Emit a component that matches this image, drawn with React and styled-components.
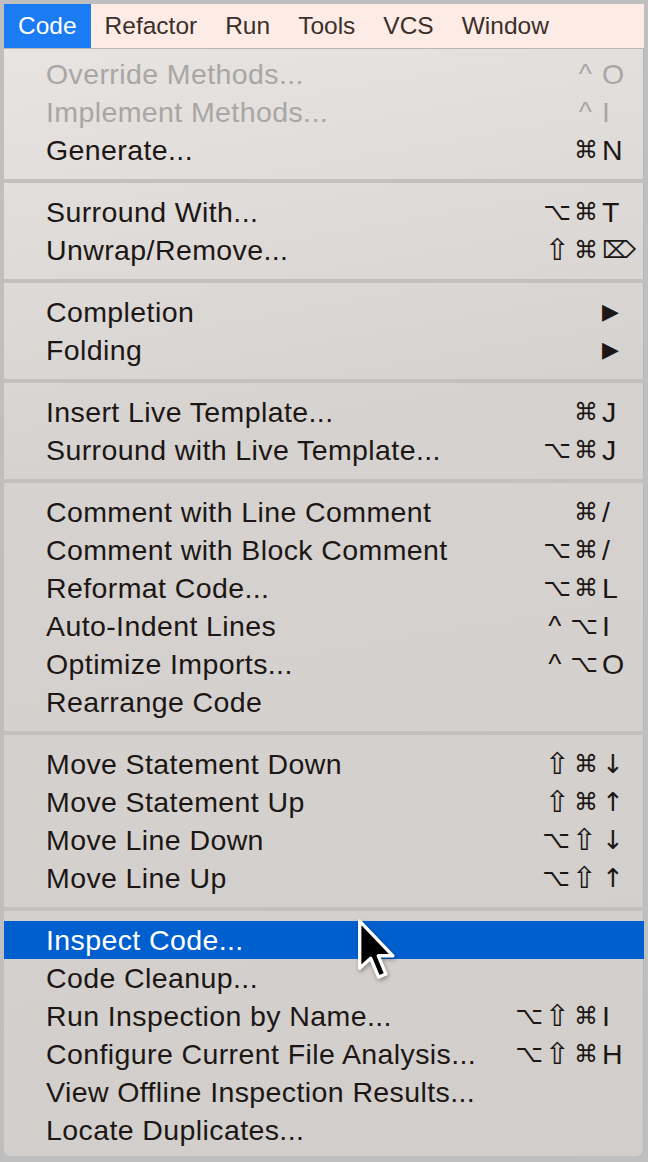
import React from "react";
import styled, { createGlobalStyle } from "styled-components";

const Global = createGlobalStyle`
  html, body { margin: 0; padding: 0; }
  body { background: #bfbfbf; font-family: "Liberation Sans", "DejaVu Sans", Arial, sans-serif; }
  * { box-sizing: border-box; }
`;

const Page = styled.div`
  width: 648px;
  height: 1162px;
  padding: 4px 4px 0 4px;
  background: #bfbfbf;
  display: flex;
  flex-direction: column;
  overflow: hidden;
`;

const MenuBar = styled.div`
  height: 45px;
  background: #fdebe6;
  border-bottom: 1px solid #b9b6b4;
  display: flex;
  align-items: stretch;
  overflow: hidden;
  white-space: nowrap;
`;

const BarItem = styled.div`
  padding: 0 14px;
  display: flex;
  align-items: center;
  font-size: 24.5px;
  color: ${p => (p.$active ? "#ffffff" : "#3b2f2a")};
  background: ${p => (p.$active ? "#1a7bf2" : "transparent")};
`;

const Menu = styled.div`
  position: relative;
  background: linear-gradient(170deg, #e8e4e1 0%, #d6d2cf 35%, #d2cecb 100%);
  padding: 6px 0 7px 0;
  border-bottom-left-radius: 6px;
  border-bottom-right-radius: 6px;
  box-shadow: inset -1px 0 0 #bab6b3;
`;

const Row = styled.div`
  height: 38px;
  display: flex;
  align-items: center;
  padding: 0 8px 0 42px;
  font-size: 28.5px;
  letter-spacing: 0.4px;
  color: ${p => (p.$disabled ? "#a9a6a4" : p.$selected ? "#ffffff" : "#1c1715")};
  background: ${p => (p.$selected ? "#005fcf" : "transparent")};
  white-space: nowrap;
`;

const Label = styled.span`
  flex: 1;
`;

const Shortcut = styled.span`
  display: flex;
  align-items: center;
  line-height: 1;
`;

const Mod = styled.span`
  font-family: ${p => (p.$caret ? '"Liberation Sans"' : '"DejaVu Sans"')}, sans-serif;
  font-size: ${p => (p.$caret ? 28 : p.$shift ? 30 : 24)}px;
  margin-left: ${p => (p.$shift ? 2 : 3)}px;
  margin-right: ${p => (p.$caret ? 6 : p.$shift ? 1 : 0)}px;
  letter-spacing: 0;
`;

const Key = styled.span`
  width: 38px;
  padding-left: 4px;
  display: flex;
  align-items: center;
  font-size: 28.5px;
  letter-spacing: 0;
`;

const Glyph = styled.span`
  font-family: "DejaVu Sans", sans-serif;
  font-size: ${p => p.$size || 24}px;
`;

const Separator = styled.div`
  height: 24px;
  display: flex;
  align-items: center;
  &::after {
    content: "";
    display: block;
    width: 100%;
    height: 4px;
    background: #c4c0bd;
  }
`;

const Cursor = styled.svg`
  position: absolute;
  left: 352px;
  top: 869px;
  width: 44px;
  height: 64px;
  filter: drop-shadow(1px 2px 2px rgba(0,0,0,0.35));
`;

const groups = [
  [
    { l: "Override Methods...", m: "^", k: "O", d: true },
    { l: "Implement Methods...", m: "^", k: "I", d: true },
    { l: "Generate...", m: "⌘", k: "N" },
  ],
  [
    { l: "Surround With...", m: "⌥⌘", k: "T" },
    { l: "Unwrap/Remove...", m: "⇧⌘", k: "⌦", g: 24 },
  ],
  [
    { l: "Completion", sub: true },
    { l: "Folding", sub: true },
  ],
  [
    { l: "Insert Live Template...", m: "⌘", k: "J" },
    { l: "Surround with Live Template...", m: "⌥⌘", k: "J" },
  ],
  [
    { l: "Comment with Line Comment", m: "⌘", k: "/" },
    { l: "Comment with Block Comment", m: "⌥⌘", k: "/" },
    { l: "Reformat Code...", m: "⌥⌘", k: "L" },
    { l: "Auto-Indent Lines", m: "^⌥", k: "I" },
    { l: "Optimize Imports...", m: "^⌥", k: "O" },
    { l: "Rearrange Code" },
  ],
  [
    { l: "Move Statement Down", m: "⇧⌘", k: "↓", g: 26 },
    { l: "Move Statement Up", m: "⇧⌘", k: "↑", g: 26 },
    { l: "Move Line Down", m: "⌥⇧", k: "↓", g: 26 },
    { l: "Move Line Up", m: "⌥⇧", k: "↑", g: 26 },
  ],
  [
    { l: "Inspect Code...", s: true },
    { l: "Code Cleanup..." },
    { l: "Run Inspection by Name...", m: "⌥⇧⌘", k: "I" },
    { l: "Configure Current File Analysis...", m: "⌥⇧⌘", k: "H" },
    { l: "View Offline Inspection Results..." },
    { l: "Locate Duplicates..." },
  ],
];

function Item({ it }) {
  return (
    <Row $disabled={it.d} $selected={it.s}>
      <Label>{it.l}</Label>
      {(it.k || it.sub) && (
        <Shortcut>
          {it.m &&
            [...it.m].map((c, i) => (
              <Mod key={i} $caret={c === "^"} $shift={c === "⇧"}>
                {c}
              </Mod>
            ))}
          <Key>
            {it.sub ? (
              <Glyph $size={22}>▶</Glyph>
            ) : it.g ? (
              <Glyph $size={it.g}>{it.k}</Glyph>
            ) : (
              it.k
            )}
          </Key>
        </Shortcut>
      )}
    </Row>
  );
}

export default function App() {
  return (
    <>
      <Global />
      <Page>
        <MenuBar>
          <BarItem $active>Code</BarItem>
          <BarItem>Refactor</BarItem>
          <BarItem>Run</BarItem>
          <BarItem>Tools</BarItem>
          <BarItem>VCS</BarItem>
          <BarItem>Window</BarItem>
        </MenuBar>
        <Menu>
          {groups.map((g, i) => (
            <React.Fragment key={i}>
              {i > 0 && <Separator />}
              {g.map((it, j) => (
                <Item key={j} it={it} />
              ))}
            </React.Fragment>
          ))}
          <Cursor viewBox="0 0 14 21">
            <path
              d="M1 1 L1 16.5 L4.6 13.2 L7.2 19.4 L9.6 18.4 L7.1 12.4 L11.9 12.4 Z"
              fill="#000"
              stroke="#fff"
              strokeWidth="1.1"
              strokeLinejoin="round"
            />
          </Cursor>
        </Menu>
      </Page>
    </>
  );
}
